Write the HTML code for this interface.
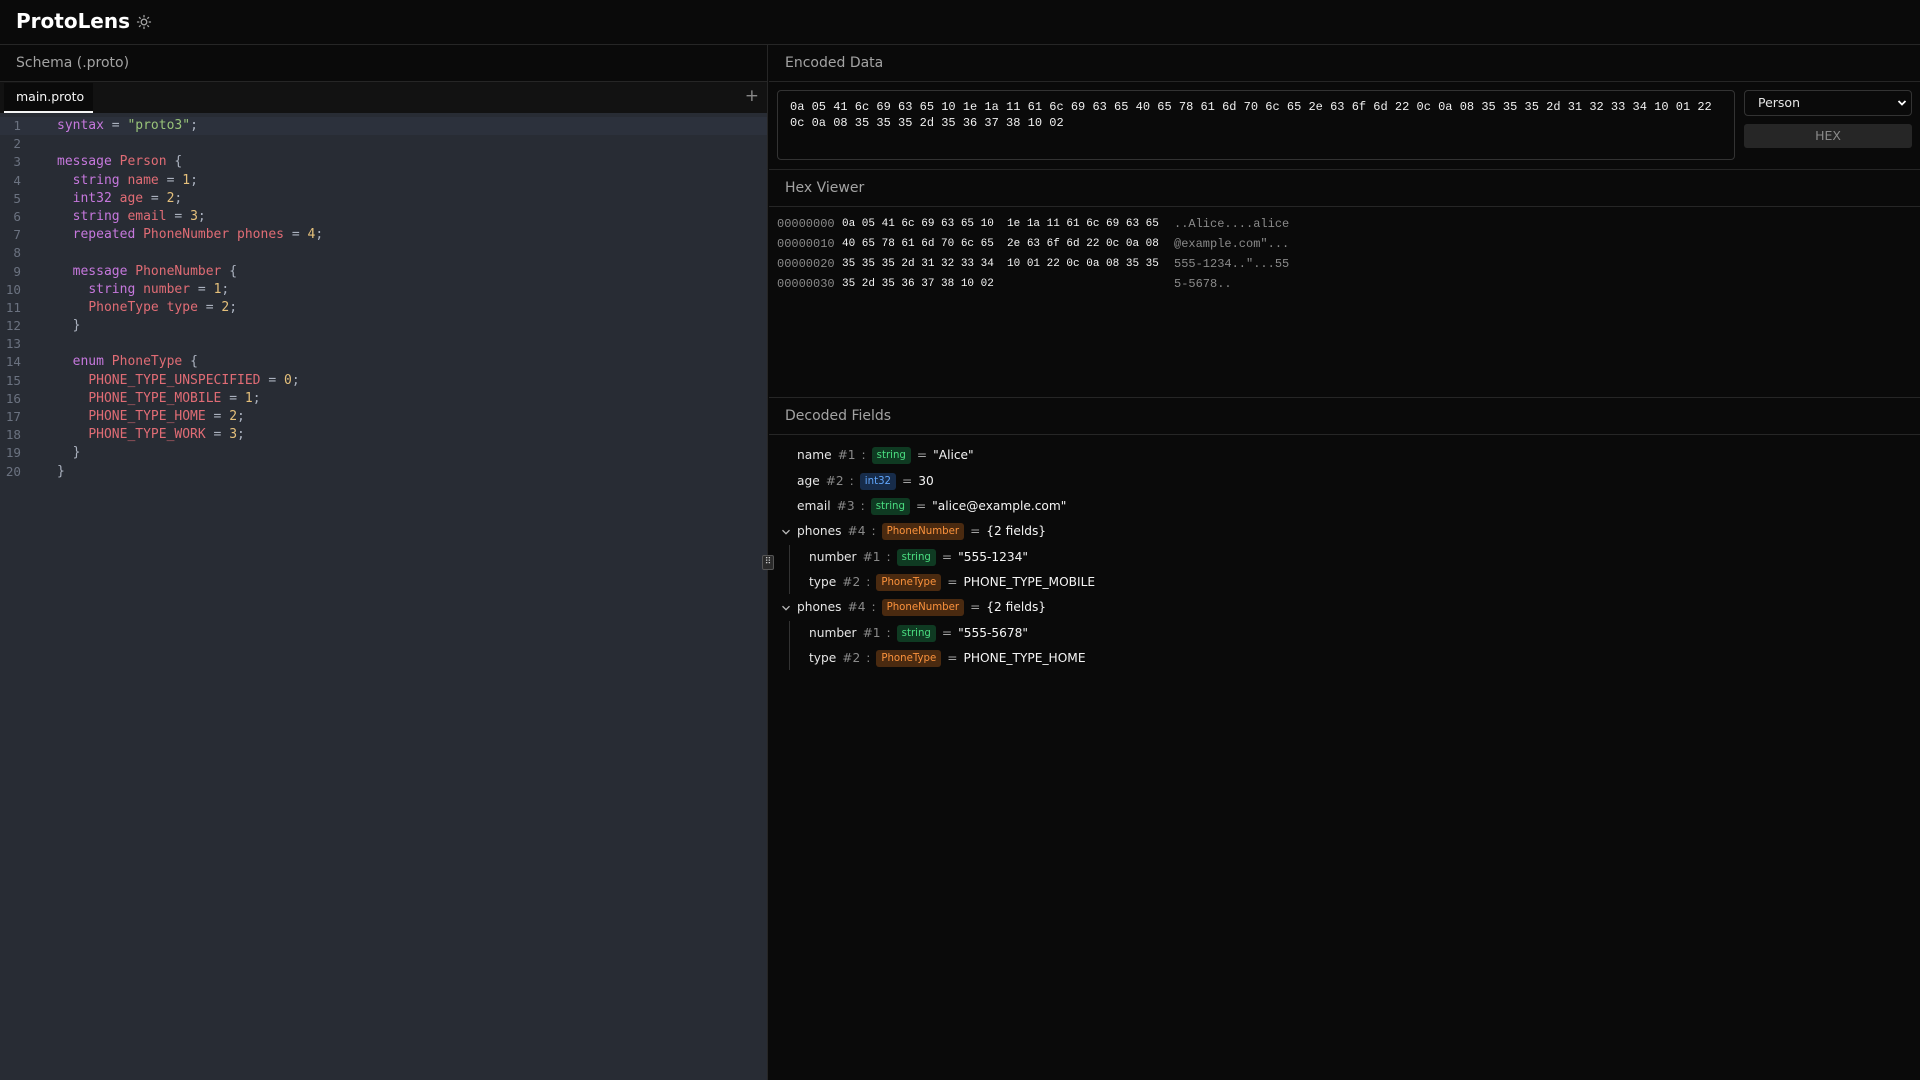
<!DOCTYPE html>
<html><head><meta charset="utf-8"><style>
*{box-sizing:border-box;margin:0;padding:0}
body{width:1920px;height:1080px;background:#0a0a0a;font-family:"DejaVu Sans","Liberation Sans",sans-serif;color:#e5e5e5;overflow:hidden;position:relative}
.abs{position:absolute}
.hdr{left:0;top:0;width:1920px;height:45px;border-bottom:1px solid #262626;background:#0a0a0a}
.title{left:16px;top:9px;font-size:20px;font-weight:bold;color:#fff}
.left{left:0;top:45px;width:768px;height:1035px;border-right:1px solid #262626;background:#282c34}
.ph{height:37px;border-bottom:1px solid #262626;background:#0a0a0a;color:#a3a3a3;font-size:14px;padding-left:16px;line-height:36px}
.tabs{height:31px;background:#121212;position:relative}
.tab{position:absolute;left:4px;top:1px;width:89px;height:30px;background:#0a0a0a;border-bottom:2px solid #f5f5f5;font-size:12.5px;color:#f5f5f5;padding-left:12px;line-height:27px}
.plus{position:absolute;right:8px;top:4px;color:#888;font-size:17px}
.code{position:relative;padding-top:4px;font-family:"DejaVu Sans Mono",monospace;font-size:13px}
.ln{height:18.2px;line-height:18.2px;white-space:pre;position:relative}
.ln .n{position:absolute;left:0;width:21px;text-align:right;color:#6b7280;font-size:12.6px}
.ln .c{position:absolute;left:57px;color:#abb2bf}
.hl{background:#2c313c}
.k{color:#c678dd}.t{color:#e06c75}.s{color:#98c379}.nu{color:#e5c07b}.p{color:#abb2bf}
.right{left:769px;top:45px;width:1151px;height:1035px}
.sh{position:absolute;left:0;width:1151px;height:37px;border-bottom:1px solid #262626;color:#a3a3a3;font-size:14px;padding-left:16px;line-height:36px}
.ta{left:777px;top:90px;width:958px;height:70px;border:1px solid #333;border-radius:4px;font-family:"Liberation Mono",monospace;font-size:12px;color:#f0f0f0;padding:8px 0 0 12px;line-height:16px}
.sel{left:1744px;top:90px;width:168px;height:26px;border:1px solid #333;border-radius:4px;font-size:12.5px;color:#e5e5e5;padding-left:13px;line-height:24px}
.btn{left:1744px;top:124px;width:168px;height:24px;border-radius:3px;background:#262626;color:#8a8a8a;font-size:12.5px;text-align:center;line-height:24px}
.hx{font-family:"Liberation Mono",monospace;white-space:pre;height:20px;line-height:20px;position:absolute}
.off{color:#8a8a8a;font-size:12px}.by{color:#f5f5f5;font-size:11px}.as{color:#8a8a8a;font-size:12px}
.row{position:absolute;height:20px;line-height:20px;font-size:12.2px;white-space:nowrap;color:#f5f5f5}
.row .fn{color:#e5e5e5}
.row .num{color:#8a8a8a;margin-left:6px}
.row .col{color:#8a8a8a;margin:0 6px}
.bd{display:inline-block;font-size:10.2px;padding:0 5px;height:17px;line-height:17px;border-radius:3px;vertical-align:1px}
.g{background:#0f3a22;color:#4ade80}
.b{background:#172c4a;color:#60a5fa}
.o{background:#4a2a10;color:#fb923c}
.eq{color:#a3a3a3;margin:0 6px}
.chev{position:absolute;left:781px;width:10px;height:10px}
</style></head><body>
<div class="abs hdr"></div>
<div class="abs title">ProtoLens</div>
<svg class="abs" style="left:136px;top:14px" width="16" height="16" viewBox="0 0 16 16" fill="none" stroke="#a3a3a3" stroke-width="1.3" stroke-linecap="round"><circle cx="8" cy="8" r="2.8"/><path d="M8 1.5v1.3M8 13.2v1.3M1.5 8h1.3M13.2 8h1.3M3.4 3.4l.9.9M11.7 11.7l.9.9M3.4 12.6l.9-.9M11.7 4.3l.9-.9"/></svg>

<div class="abs left">
<div class="ph">Schema (.proto)</div>
<div class="tabs"><div class="tab">main.proto</div><div class="plus">+</div></div>
<div class="code">
<div class="ln hl"><span class="n">1</span><span class="c"><span class="k">syntax</span> = <span class="s">"proto3"</span>;</span></div>
<div class="ln"><span class="n">2</span></div>
<div class="ln"><span class="n">3</span><span class="c"><span class="k">message</span> <span class="t">Person</span> {</span></div>
<div class="ln"><span class="n">4</span><span class="c">  <span class="k">string</span> <span class="t">name</span> = <span class="nu">1</span>;</span></div>
<div class="ln"><span class="n">5</span><span class="c">  <span class="k">int32</span> <span class="t">age</span> = <span class="nu">2</span>;</span></div>
<div class="ln"><span class="n">6</span><span class="c">  <span class="k">string</span> <span class="t">email</span> = <span class="nu">3</span>;</span></div>
<div class="ln"><span class="n">7</span><span class="c">  <span class="k">repeated</span> <span class="t">PhoneNumber</span> <span class="t">phones</span> = <span class="nu">4</span>;</span></div>
<div class="ln"><span class="n">8</span></div>
<div class="ln"><span class="n">9</span><span class="c">  <span class="k">message</span> <span class="t">PhoneNumber</span> {</span></div>
<div class="ln"><span class="n">10</span><span class="c">    <span class="k">string</span> <span class="t">number</span> = <span class="nu">1</span>;</span></div>
<div class="ln"><span class="n">11</span><span class="c">    <span class="t">PhoneType</span> <span class="t">type</span> = <span class="nu">2</span>;</span></div>
<div class="ln"><span class="n">12</span><span class="c">  }</span></div>
<div class="ln"><span class="n">13</span></div>
<div class="ln"><span class="n">14</span><span class="c">  <span class="k">enum</span> <span class="t">PhoneType</span> {</span></div>
<div class="ln"><span class="n">15</span><span class="c">    <span class="t">PHONE_TYPE_UNSPECIFIED</span> = <span class="nu">0</span>;</span></div>
<div class="ln"><span class="n">16</span><span class="c">    <span class="t">PHONE_TYPE_MOBILE</span> = <span class="nu">1</span>;</span></div>
<div class="ln"><span class="n">17</span><span class="c">    <span class="t">PHONE_TYPE_HOME</span> = <span class="nu">2</span>;</span></div>
<div class="ln"><span class="n">18</span><span class="c">    <span class="t">PHONE_TYPE_WORK</span> = <span class="nu">3</span>;</span></div>
<div class="ln"><span class="n">19</span><span class="c">  }</span></div>
<div class="ln"><span class="n">20</span><span class="c">}</span></div>
</div>
</div>
<div class="abs" style="left:762px;top:555px;width:12px;height:15px;border:1px solid #555;border-radius:2px;background:#2a2a2a;color:#ccc;font-size:9px;line-height:13px;text-align:center">⠿</div>

<div class="abs right">
<div class="sh" style="top:0">Encoded Data</div>
<div class="sh" style="top:124px;border-top:1px solid #262626;height:38px">Hex Viewer</div>
<div class="sh" style="top:352px;border-top:1px solid #262626;height:38px">Decoded Fields</div>
</div>
<div class="abs ta">0a 05 41 6c 69 63 65 10 1e 1a 11 61 6c 69 63 65 40 65 78 61 6d 70 6c 65 2e 63 6f 6d 22 0c 0a 08 35 35 35 2d 31 32 33 34 10 01 22<br>0c 0a 08 35 35 35 2d 35 36 37 38 10 02</div>
<div class="abs sel">Person<svg style="position:absolute;right:4px;top:8px" width="10" height="8" viewBox="0 0 10 8"><path d="M1.5 2l3.5 3.5L8.5 2" fill="none" stroke="#fff" stroke-width="1.8"/></svg></div>
<div class="abs btn">HEX</div>

<div class="hx off" style="left:777px;top:214px">00000000</div><div class="hx by" style="left:842px;top:214px">0a 05 41 6c 69 63 65 10  1e 1a 11 61 6c 69 63 65</div><div class="hx as" style="left:1174px;top:214px">..Alice....alice</div>
<div class="hx off" style="left:777px;top:234px">00000010</div><div class="hx by" style="left:842px;top:234px">40 65 78 61 6d 70 6c 65  2e 63 6f 6d 22 0c 0a 08</div><div class="hx as" style="left:1174px;top:234px">@example.com"...</div>
<div class="hx off" style="left:777px;top:254px">00000020</div><div class="hx by" style="left:842px;top:254px">35 35 35 2d 31 32 33 34  10 01 22 0c 0a 08 35 35</div><div class="hx as" style="left:1174px;top:254px">555-1234.."...55</div>
<div class="hx off" style="left:777px;top:274px">00000030</div><div class="hx by" style="left:842px;top:274px">35 2d 35 36 37 38 10 02</div><div class="hx as" style="left:1174px;top:274px">5-5678..</div>

<div class="row" style="left:797px;top:445px"><span class="fn">name</span><span class="num">#1</span><span class="col">:</span><span class="bd g">string</span><span class="eq">=</span>"Alice"</div>
<div class="row" style="left:797px;top:471px"><span class="fn">age</span><span class="num">#2</span><span class="col">:</span><span class="bd b">int32</span><span class="eq">=</span>30</div>
<div class="row" style="left:797px;top:496px"><span class="fn">email</span><span class="num">#3</span><span class="col">:</span><span class="bd g">string</span><span class="eq">=</span>"alice@example.com"</div>
<svg class="chev" style="top:527px" viewBox="0 0 10 10"><path d="M1.5 3.2L5 6.7l3.5-3.5" fill="none" stroke="#bbb" stroke-width="1.3"/></svg>
<div class="row" style="left:797px;top:521px"><span class="fn">phones</span><span class="num">#4</span><span class="col">:</span><span class="bd o">PhoneNumber</span><span class="eq">=</span>{2 fields}</div>
<div class="abs" style="left:789px;top:545px;width:1px;height:49px;background:#333"></div>
<div class="row" style="left:809px;top:547px"><span class="fn">number</span><span class="num">#1</span><span class="col">:</span><span class="bd g">string</span><span class="eq">=</span>"555-1234"</div>
<div class="row" style="left:809px;top:572px"><span class="fn">type</span><span class="num">#2</span><span class="col">:</span><span class="bd o">PhoneType</span><span class="eq">=</span>PHONE_TYPE_MOBILE</div>
<svg class="chev" style="top:603px" viewBox="0 0 10 10"><path d="M1.5 3.2L5 6.7l3.5-3.5" fill="none" stroke="#bbb" stroke-width="1.3"/></svg>
<div class="row" style="left:797px;top:597px"><span class="fn">phones</span><span class="num">#4</span><span class="col">:</span><span class="bd o">PhoneNumber</span><span class="eq">=</span>{2 fields}</div>
<div class="abs" style="left:789px;top:621px;width:1px;height:49px;background:#333"></div>
<div class="row" style="left:809px;top:623px"><span class="fn">number</span><span class="num">#1</span><span class="col">:</span><span class="bd g">string</span><span class="eq">=</span>"555-5678"</div>
<div class="row" style="left:809px;top:648px"><span class="fn">type</span><span class="num">#2</span><span class="col">:</span><span class="bd o">PhoneType</span><span class="eq">=</span>PHONE_TYPE_HOME</div>
</body></html>
